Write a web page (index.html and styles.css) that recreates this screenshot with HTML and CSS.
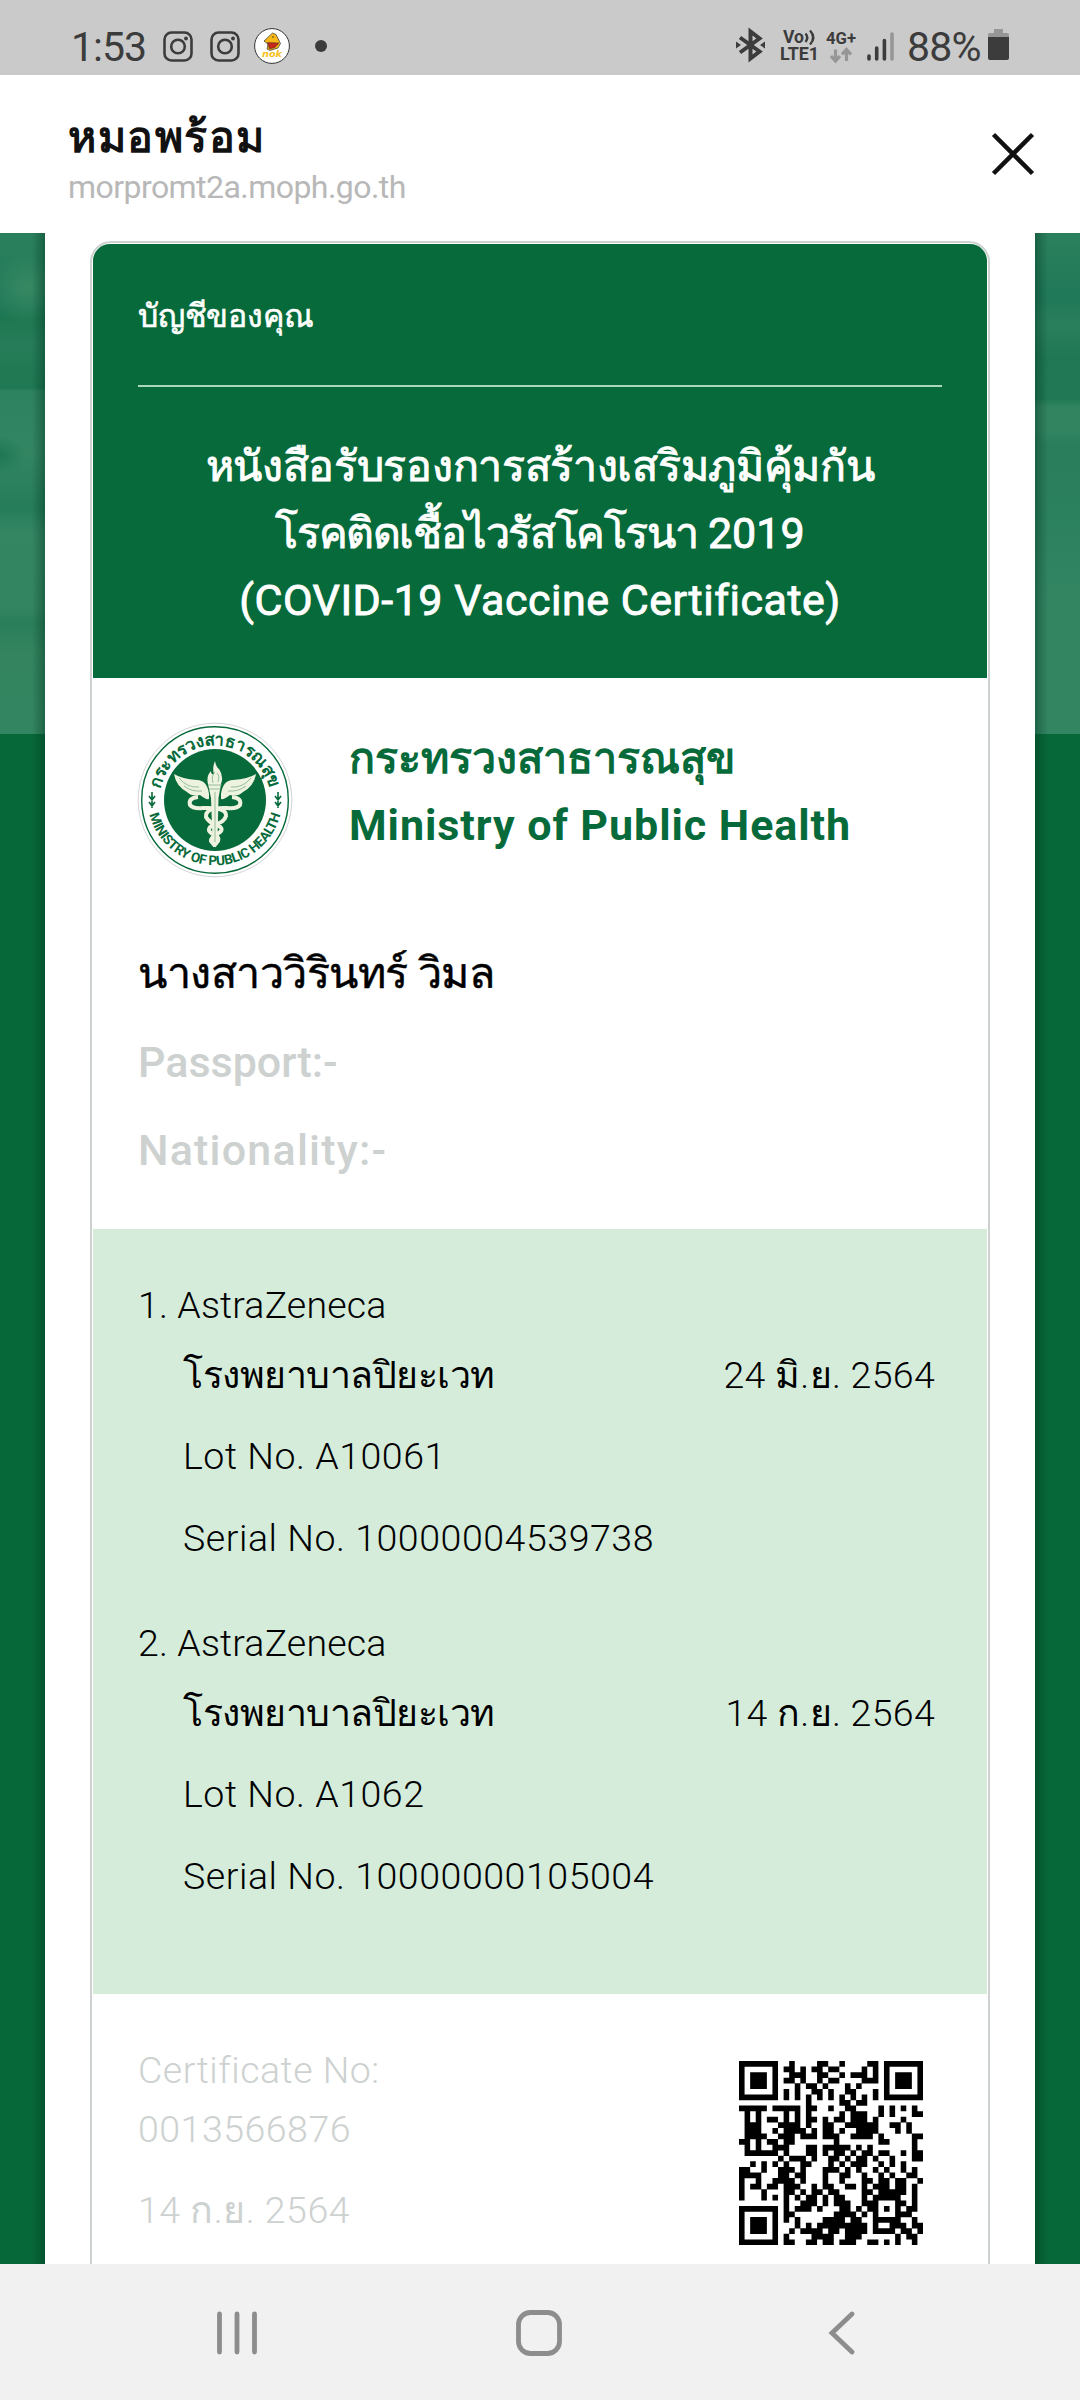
FILE: index.html
```html
<!DOCTYPE html>
<html lang="th">
<head>
<meta charset="utf-8">
<title>หมอพร้อม</title>
<link rel="stylesheet" href="styles.css">
</head>
<body>
<div class="status">
  <div class="status-left">
    <span class="clock">1:53</span>
    <svg class="insta" viewBox="0 0 30 31"><rect x="1.5" y="1.5" width="27" height="28" rx="7"/><circle cx="15" cy="15.5" r="6.8"/><circle class="fill" cx="23" cy="7.5" r="1.9"/></svg>
    <svg class="insta" viewBox="0 0 30 31"><rect x="1.5" y="1.5" width="27" height="28" rx="7"/><circle cx="15" cy="15.5" r="6.8"/><circle class="fill" cx="23" cy="7.5" r="1.9"/></svg>
    <svg class="nok" viewBox="0 0 36 36"><circle cx="18" cy="18" r="17.4" fill="#fff" stroke="#333"/><path d="M10 13 18.500 5 22 6.500 26.500 15.500 24 20 16 22.500 13 21 14 16Z" fill="#f8b818" stroke="#333" stroke-width=".7"/><path d="M13.500 14.500 25 15 21 19.500 15.500 21Z" fill="#c52718" stroke="#333" stroke-width=".5"/><circle cx="19" cy="9" r=".8" fill="#333"/><text x="8" y="28.500" textLength="20" lengthAdjust="spacingAndGlyphs">nok</text></svg>
    <span class="dot"></span>
  </div>
  <div class="status-right">
    <svg class="bt" viewBox="0 0 29 32"><path d="M4 8.500 23.500 22.500 14.500 29.500V2.500L23.500 9.500 4 23.500"/><path class="fill" d="M0 12.500 5 16 0 19.500ZM29 12.500 24 16 29 19.500Z"/></svg>
    <svg class="volte" viewBox="0 0 40 32"><text x="3" y="14" textLength="21" lengthAdjust="spacingAndGlyphs">Vo</text><path d="M25.500 4.500Q29 8.500 25.500 13M30 1.500Q36.500 8.500 30 15.500"/><text x="0" y="31" textLength="39" lengthAdjust="spacingAndGlyphs">LTE1</text></svg>
    <svg class="net" viewBox="0 0 31 34"><text x="0" y="15" textLength="30" lengthAdjust="spacingAndGlyphs">4G+</text><path d="M9.500 20.500V31M5 27l4.500 5 4.500-5M20.500 32V21M16 25.500l4.500-5 4.500 5"/></svg>
    <svg class="signal" viewBox="0 0 27 29"><path d="M2 24v3M9.700 16v11M17.400 8.500V27"/><path class="dim" d="M25 2v25"/></svg>
    <span class="pct">88%</span>
    <svg class="battery" viewBox="0 0 21 32"><path fill="#969696" d="M6 0h9v4h4q2 0 2 2v3H0V6q0-2 2-2h4Z"/><path fill="#3c3c3c" d="M0 8h21v21q0 2-2 2H2q-2 0-2-2Z"/></svg>
  </div>
</div>

<header class="header">
  <div class="site">
    <h1>หมอพร้อม</h1>
    <p>morpromt2a.moph.go.th</p>
  </div>
  <svg class="close" viewBox="0 0 44 44"><path d="M2.500 2.500 41.500 41.500M41.500 2.500 2.500 41.500"/></svg>
</header>

<main class="stage">
  <div class="panel">
    <article class="card">
      <section class="cover">
        <p class="account">บัญชีของคุณ</p>
        <h2><span class="title-th">หนังสือรับรองการสร้างเสริมภูมิคุ้มกัน</span><br><span class="title-disease">โรคติดเชื้อไวรัสโคโรนา</span> 2019<br><span class="title-en">(COVID-19 Vaccine Certificate)</span></h2>
      </section>
      <section class="issuer">
        <svg class="seal" viewBox="0 0 156 156">
          <defs><path id="arc-top" d="M22.500 87A56 56 0 1 1 133.500 87"/><path id="arc-bottom" d="M11 84A67.500 67.500 0 0 0 145 84"/></defs>
          <circle cx="78" cy="78" r="76.800" fill="#fff" stroke="#d4d4d4"/>
          <circle cx="78" cy="78" r="73.300" fill="none" stroke="#076a3a" stroke-width="1.400"/>
          <circle cx="78" cy="78" r="51" fill="#076a3a"/>
          <text class="seal-th"><textPath href="#arc-top" startOffset="50%" text-anchor="middle" textLength="150">กระทรวงสาธารณสุข</textPath></text>
          <text class="seal-en"><textPath href="#arc-bottom" startOffset="50%" text-anchor="middle" textLength="178">MINISTRY OF PUBLIC HEALTH</textPath></text>
          <path class="leaf" d="M15 70v16M12 74l3 4 3-4M12 80l3 4 3-4M141 70v16M138 74l3 4 3-4M138 80l3 4 3-4"/>
          <g class="staff">
            <path d="M74 76 71 62Q69 54 74 49Q74 53 77 52Q75 46 78 39Q79 45 82 47Q87 54 84 62L81.500 76 80.500 118 78 125 75.500 118Z"/>
            <path d="M72 72Q70 58 60 58Q45 57 37 52Q39 64 50 70Q55 75 63 73Q69 78 72 77ZM84 72Q86 58 96 58Q111 57 119 52Q117 64 106 70Q101 75 93 73Q87 78 84 77Z"/>
            <path class="snake" d="M61 75Q51 76 53 83Q56 87 66 86 90 85 89 94 87 101 76 103 69 107 74 111 83 114 81 119L77 124M95 75Q105 76 103 83 100 87 90 86 68 85 69 95 72 101 82 104 88 108 80 112 74 115 74 119L78 124"/>
            <path class="rib" d="M42 56Q50 66 62 65M47 64Q55 70 65 69M114 56Q106 66 94 65M109 64Q101 70 91 69M71 63H85M72 67H84M78 70V120M76 61Q74 54 78 50M81 60Q83 54 80 51"/>
          </g>
        </svg>
        <div class="ministry"><p>กระทรวงสาธารณสุข</p><p class="ministry-en">Ministry of Public Health</p></div>
      </section>
      <section class="holder">
        <p class="name">นางสาววิรินทร์ วิมล</p>
        <p class="muted">Passport:-</p>
        <p class="muted nation">Nationality:-</p>
      </section>
      <section class="doses">
        <div class="dose">
          <p class="brand">1. AstraZeneca</p>
          <div class="row"><span class="hospital">โรงพยาบาลปิยะเวท</span><span class="date">24 มิ.ย. 2564</span></div>
          <p class="detail">Lot No. A10061</p>
          <p class="detail">Serial No. 10000004539738</p>
        </div>
        <div class="dose">
          <p class="brand">2. AstraZeneca</p>
          <div class="row"><span class="hospital">โรงพยาบาลปิยะเวท</span><span class="date">14 ก.ย. 2564</span></div>
          <p class="detail">Lot No. A1062</p>
          <p class="detail">Serial No. 10000000105004</p>
        </div>
      </section>
      <section class="footer">
        <div class="cert"><p>Certificate No:</p><p>0013566876</p><p class="issued">14 ก.ย. 2564</p></div>
        <svg class="qr" id="qr" viewBox="0 0 33 33"></svg>
      </section>
    </article>
  </div>
</main>

<nav class="nav">
  <svg class="recent" viewBox="0 0 40 44"><path d="M2.500 3v38M20 3v38M37.500 3v38"/></svg>
  <svg class="home" viewBox="0 0 46 46"><rect x="2.500" y="2.500" width="41" height="41" rx="12"/></svg>
  <svg class="back" viewBox="0 0 28 44"><path d="M25 3 5 22 25 41"/></svg>
</nav>
<script src="qr.js"></script>
</body>
</html>
```
FILE: styles.css
```css
* { box-sizing: border-box; }
body { margin: 0; width: 1080px; height: 2400px; overflow: hidden; display: flex; flex-direction: column; background: #fff; font-family: Roboto, "Noto Sans", sans-serif; }
h1, h2, p { margin: 0; }
svg { display: block; flex: none; }

.status { height: 75px; flex: none; background: #cacaca; color: #3c3c3c; display: flex; justify-content: space-between; padding: 0 71px; }
.status svg { overflow: visible; }
.status-left, .status-right { display: flex; align-items: flex-start; }
.clock { font-size: 41px; line-height: 46px; margin-top: 24px; width: 76px; letter-spacing: -1px; white-space: nowrap; }
.insta { width: 30px; height: 31px; margin: 31px 0 0 16px; fill: none; stroke: #3c3c3c; stroke-width: 2.6; }
.insta + .insta { margin-left: 17px; }
.insta .fill { fill: #3c3c3c; stroke: none; }
.nok { width: 36px; height: 36px; margin: 28px 0 0 14px; }
.nok text { font: italic 900 8px "DejaVu Sans", sans-serif; fill: #f8c020; }
.dot { width: 12px; height: 12px; border-radius: 50%; background: #3c3c3c; margin: 40px 0 0 25px; }
.bt { width: 29px; height: 32px; margin-top: 29px; fill: none; stroke: #3c3c3c; stroke-width: 4; }
.bt .fill { fill: #3c3c3c; stroke: none; }
.volte { width: 40px; height: 32px; margin: 29px 0 0 15px; fill: none; stroke: #3c3c3c; stroke-width: 2.4; }
.volte text, .net text { font: 700 18px Roboto, sans-serif; fill: #3c3c3c; stroke: none; }
.net { width: 31px; height: 34px; margin: 29px 0 0 6px; fill: none; stroke: #969696; stroke-width: 3.2; }
.net text { font-size: 17px; }
.signal { width: 27px; height: 29px; margin: 32px 0 0 10px; fill: none; stroke: #3c3c3c; stroke-width: 3.6; stroke-linecap: round; }
.signal .dim { stroke: #969696; }
.pct { font-size: 41px; line-height: 46px; margin: 24px 0 0 13px; width: 74px; letter-spacing: -.8px; white-space: nowrap; }
.battery { width: 21px; height: 32px; margin: 29px 0 0 7px; }

.header { height: 158px; flex: none; display: flex; justify-content: space-between; padding: 0 45px 0 68px; }
.site h1 { font-size: 43px; line-height: 60px; margin-top: 32px; font-weight: 700; letter-spacing: 1.5px; color: #111; }
.site p { font-size: 32px; line-height: 40px; letter-spacing: -.55px; color: #b8b8b8; }
.close { width: 44px; height: 44px; margin-top: 57px; stroke: #111; stroke-width: 4.5; }

.stage { height: 2031px; flex: none; overflow: hidden; padding: 0 45px; background:
  linear-gradient(90deg, transparent 32px, rgba(0,50,30,.4) 45px, rgba(0,50,30,.4) 1035px, transparent 1048px),
  linear-gradient(180deg, #2b805c 0, #20795a 65px, #2a7f5b 92px, #1f7754 125px, #207854 166px, #328460 174px, #328461 198px, #2b7e5b 210px, #2b805d 280px, #338562 370px, #338562 501px, transparent 501px) right / 45px 100% no-repeat,
  radial-gradient(circle at 27px 55px, rgba(60,140,100,.8), transparent 36px),
  radial-gradient(ellipse 24px 20px at 0 222px, #1c7752, transparent),
  linear-gradient(180deg, #2b805c 0, #20795a 70px, #1d7751 85px, #267c58 110px, #1e7852 155px, #2d8260 158px, #338562 220px, #257c59 275px, #348663 300px, #338561 375px, #2b7e5a 390px, #33845f 420px, #338561 501px, #066838 501px); }
.panel { height: 100%; background: #fff; padding: 8px 45px 0; }
.card { height: 2100px; border: 2px solid #cdd1d0; border-radius: 21px; padding: 1px; }
.cover { height: 434px; background: #076a3a; color: #fff; border-radius: 17px 17px 0 0; padding: 42px 45px 0; }
.account { height: 101px; border-bottom: 2px solid #a9d8bf; font-size: 32px; line-height: 60px; letter-spacing: -.2px; -webkit-text-stroke: .6px; }
.cover h2 { margin-top: 46px; font-size: 43px; line-height: 67px; font-weight: 400; -webkit-text-stroke: .9px; text-align: center; white-space: nowrap; }
.title-th { letter-spacing: -.3px; }
.title-disease { letter-spacing: -1.4px; }
.title-en { letter-spacing: .5px; }
.issuer { display: flex; padding: 44px 44px 0; height: 222px; }
.seal { width: 156px; height: 156px; }
.seal text { fill: #076a3a; font-weight: 700; }
.seal-th { font-size: 17px; }
.seal-en { font-size: 13.500px; }
.leaf { fill: none; stroke: #076a3a; stroke-width: 1.6; }
.staff { fill: #eef3df; }
.snake { fill: none; stroke: #eef3df; stroke-width: 4; }
.rib { fill: none; stroke: #7fae8b; stroke-width: .8; }
.ministry { margin-left: 56px; padding-top: 3px; color: #076a3a; font-weight: 700; font-size: 43px; line-height: 67px; white-space: nowrap; }
.ministry-en { letter-spacing: .95px; }
.holder { height: 329px; padding: 29px 45px 0; font-weight: 500; font-size: 43px; line-height: 88.500px; white-space: nowrap; }
.name { font-weight: 400; letter-spacing: -.5px; -webkit-text-stroke: .5px; }
.nation { letter-spacing: 1.2px; }
.muted { color: #cdd1d0; }
.doses { height: 765px; padding: 43px 45px 0; background: #d5ecdb; font-size: 37.500px; font-weight: 300; white-space: nowrap; }
.dose { height: 338px; }
.brand { line-height: 66px; letter-spacing: .15px; }
.row { display: flex; justify-content: space-between; padding: 0 7px 0 45px; height: 78px; line-height: 74px; }
.hospital { letter-spacing: -.5px; }
.date { letter-spacing: .3px; }
.detail { padding-left: 45px; line-height: 81.500px; letter-spacing: .55px; }
.footer { display: flex; justify-content: space-between; padding: 0 64px 0 45px; }
.cert { font-size: 37.500px; font-weight: 300; line-height: 59px; letter-spacing: .5px; padding-top: 47px; color: #cdd1d0; white-space: nowrap; }
.issued { margin-top: 22px; }
.qr { width: 184px; height: 184px; margin-top: 67px; }

.nav { height: 136px; flex: none; background: #f1f1f1; display: flex; align-items: center; padding: 7px 0 5px 217px; fill: none; stroke: #8d8d8d; stroke-width: 4.800; stroke-linecap: round; }
.recent { width: 40px; height: 44px; }
.home { width: 46px; height: 46px; margin-left: 259px; }
.back { width: 28px; height: 44px; margin-left: 265px; }
```
FILE: qr.js
```js
// Module matrix of the certificate QR code, one string per row.
const rows = [
  "111111100100001100100001101111111",
  "100000101101011011000010101000001",
  "101110100111001100101110101011101",
  "101110101101001011000011101011101",
  "101110100010110100010100001011101",
  "100000101010011010011000101000001",
  "111111101010101010101010101111111",
  "000000000000100000110110000000000",
  "111110111110110010011000010101010",
  "010100001010100000101110010100011",
  "010101101010110101101110100001000",
  "011100011110100110011111100110100",
  "011100101111010110100111100010100",
  "011110011101110111001111010000011",
  "110101101100000001000000011000010",
  "010100111000110111110101000000010",
  "011111101000110101101011011001011",
  "000000010111010011010110100100011",
  "001010101001100010101110010101000",
  "110010011101000111010100101001010",
  "111100011011000100110010010100110",
  "100100111101000100100011011011001",
  "101101101110010110011010111011010",
  "100010001101011011000011011111010",
  "100010101010110101100010111110010",
  "000000001001110101110011100011010",
  "111111101011101000110101101010110",
  "100000101100000001111010100011100",
  "101110101010000111101100111110010",
  "101110100010101111111110100111011",
  "101110100101111011011110111101101",
  "100000101000011110011100000010110",
  "111111101100110110111001101010010"
];
let d = "";
rows.forEach((row, y) => {
  for (const run of row.matchAll(/1+/g)) {
    d += `M${run.index} ${y}h${run[0].length}v1.03h-${run[0].length}z`;
  }
});
const path = document.createElementNS("http://www.w3.org/2000/svg", "path");
path.setAttribute("d", d);
document.getElementById("qr").appendChild(path);
```
